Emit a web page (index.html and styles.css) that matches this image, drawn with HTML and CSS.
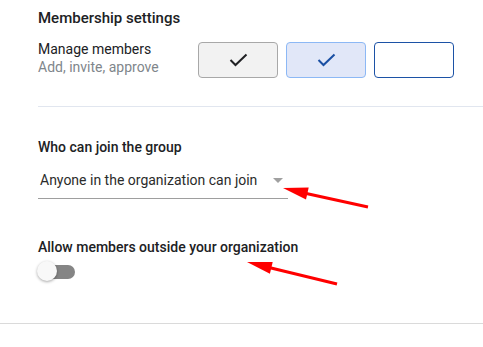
FILE: index.html
```html
<!DOCTYPE html>
<html lang="en">
<head>
    <meta charset="UTF-8">
    <meta name="viewport" content="width=device-width, initial-scale=1.0">
    <title>Membership settings</title>
    <link rel="stylesheet" href="styles.css">
</head>
<body>
    <div class="page">
        <div class="section">
            <h2 class="section-title">Membership settings</h2>
            <div class="perm-row">
                <div class="perm-label">
                    <div class="perm-name">Manage members</div>
                    <div class="perm-desc">Add, invite, approve</div>
                </div>
                <div class="perm-boxes">
                    <div class="perm-box box-owner">
                        <svg width="19" height="14" viewBox="0 0 19 14"><polyline points="1.5,7 6.5,12 17.5,1.5" fill="none" stroke="#202124" stroke-width="2"/></svg>
                    </div>
                    <div class="perm-box box-manager">
                        <svg width="19" height="14" viewBox="0 0 19 14"><polyline points="1.5,7 6.5,12 17.5,1.5" fill="none" stroke="#1a4fa3" stroke-width="2"/></svg>
                    </div>
                    <div class="perm-box box-member"></div>
                </div>
            </div>
        </div>
        <div class="divider"></div>

        <div class="section section-join">
            <div class="field-title">Who can join the group</div>
            <div class="select">
                <span class="select-value">Anyone in the organization can join</span>
                <span class="select-arrow"></span>
            </div>

            <div class="field-title field-outside">Allow members outside your organization</div>
            <div class="toggle">
                <div class="toggle-track"></div>
                <div class="toggle-thumb"></div>
            </div>
        </div>
        <div class="divider-full"></div>

        <!-- annotation arrows -->
        <svg class="annotations" width="483" height="347" viewBox="0 0 483 347">
            <line x1="304" y1="193" x2="368" y2="207" stroke="#ff0000" stroke-width="3"/>
            <polygon points="283,188 306,199.4 308.7,187.6" fill="#ff0000"/>
            <line x1="269" y1="267.5" x2="337" y2="284" stroke="#ff0000" stroke-width="3"/>
            <polygon points="247,262 269.9,273.7 272.7,262.1" fill="#ff0000"/>
        </svg>
    </div>
</body>
</html>
```

FILE: styles.css
```css
body {
    margin: 0;
    font-family: Roboto, "Liberation Sans", Arial, sans-serif;
    color: #202124;
    background-color: white;
}

.page {
    position: relative;
    width: 483px;
    height: 347px;
    overflow: hidden;
}

.section {
    padding-left: 38px;
}

.section-title {
    margin: 8px 0 0 0;
    font-size: 15px;
    line-height: 20px;
    font-weight: 500;
}

.perm-row {
    display: flex;
    margin-top: 12px;
}

.perm-label {
    width: 160px;
    font-size: 14px;
    line-height: 18px;
}

.perm-desc {
    color: #80868b;
}

.perm-boxes {
    display: flex;
    gap: 8px;
    margin-top: 2px;
}

.perm-box {
    width: 80px;
    height: 36px;
    box-sizing: border-box;
    border-radius: 4px;
    border: 1px solid #a8a8a8;
    display: flex;
    align-items: center;
    justify-content: center;
}

.box-owner {
    background-color: #f2f2f2;
}

.box-manager {
    background-color: #e1e7f8;
    border-color: #8cb8f5;
}

.box-member {
    background-color: white;
    border-color: #1c52a6;
}

.divider {
    margin: 28px 0 0 38px;
    height: 1px;
    background-color: #e1e6ef;
}

.section-join {
    padding-top: 31px;
    height: 216px;
    box-sizing: border-box;
}

.field-title {
    font-size: 14px;
    line-height: 18px;
    font-weight: 500;
}

.select {
    width: 250px;
    margin-top: 15px;
    padding: 0 5px 9px 2px;
    box-sizing: border-box;
    border-bottom: 1px solid #9e9e9e;
    display: flex;
    align-items: center;
    justify-content: space-between;
    font-size: 14px;
    line-height: 18px;
    color: #2b2b2b;
}

.select-arrow {
    width: 0;
    height: 0;
    border-left: 5px solid transparent;
    border-right: 5px solid transparent;
    border-top: 5px solid #a0a0a0;
}

.field-outside {
    margin-top: 39px;
}

.toggle {
    position: relative;
    width: 40px;
    height: 22px;
    margin-top: 5px;
}

.toggle-track {
    position: absolute;
    left: 3px;
    top: 4px;
    width: 34px;
    height: 14px;
    border-radius: 7px;
    background-color: #858585;
}

.toggle-thumb {
    position: absolute;
    left: -1px;
    top: 0;
    width: 20px;
    height: 20px;
    border-radius: 50%;
    background-color: #f8f8f8;
    box-shadow: 0 1px 3px rgba(0, 0, 0, 0.35);
}

.divider-full {
    height: 1px;
    background-color: #dadada;
}

.annotations {
    position: absolute;
    left: 0;
    top: 0;
    pointer-events: none;
}
```
